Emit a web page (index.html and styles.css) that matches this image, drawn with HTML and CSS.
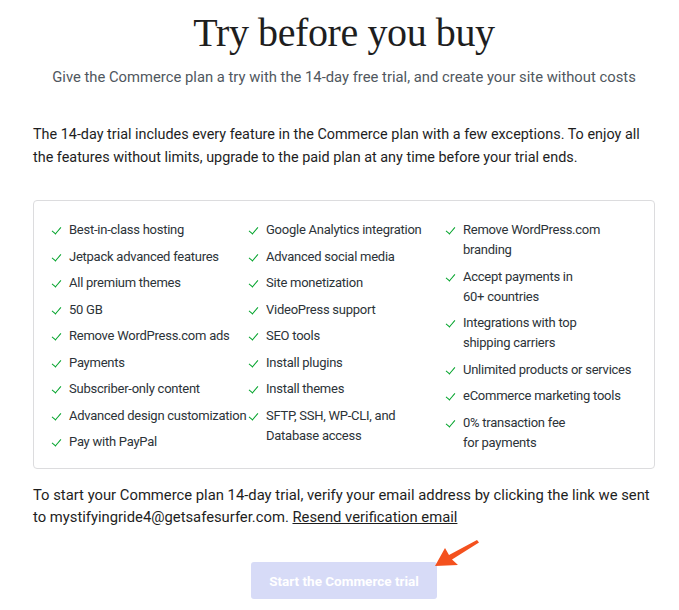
FILE: index.html
```html
<!DOCTYPE html>
<html>
<head>
<meta charset="utf-8">
<link rel="stylesheet" href="styles.css">
</head>
<body>
<main class="page">
  <h1 class="title">Try before you buy</h1>
  <p class="subtitle">Give the Commerce plan a try with the 14-day free trial, and create your site without costs</p>
  <p class="intro">The 14-day trial includes every feature in the Commerce plan with a few exceptions. To enjoy all the features without limits, upgrade to the paid plan at any time before your trial ends.</p>
  <div class="features">
    <ul class="col">
      <li><span class="check"></span><span>Best-in-class hosting</span></li>
      <li><span class="check"></span><span>Jetpack advanced features</span></li>
      <li><span class="check"></span><span>All premium themes</span></li>
      <li><span class="check"></span><span>50 GB</span></li>
      <li><span class="check"></span><span>Remove WordPress.com ads</span></li>
      <li><span class="check"></span><span>Payments</span></li>
      <li><span class="check"></span><span>Subscriber-only content</span></li>
      <li><span class="check"></span><span>Advanced design customization</span></li>
      <li><span class="check"></span><span>Pay with PayPal</span></li>
    </ul>
    <ul class="col">
      <li><span class="check"></span><span>Google Analytics integration</span></li>
      <li><span class="check"></span><span>Advanced social media</span></li>
      <li><span class="check"></span><span>Site monetization</span></li>
      <li><span class="check"></span><span>VideoPress support</span></li>
      <li><span class="check"></span><span>SEO tools</span></li>
      <li><span class="check"></span><span>Install plugins</span></li>
      <li><span class="check"></span><span>Install themes</span></li>
      <li><span class="check"></span><span>SFTP, SSH, WP-CLI, and<br>Database access</span></li>
    </ul>
    <ul class="col">
      <li><span class="check"></span><span>Remove WordPress.com<br>branding</span></li>
      <li><span class="check"></span><span>Accept payments in<br>60+ countries</span></li>
      <li><span class="check"></span><span>Integrations with top<br>shipping carriers</span></li>
      <li><span class="check"></span><span>Unlimited products or services</span></li>
      <li><span class="check"></span><span>eCommerce marketing tools</span></li>
      <li><span class="check"></span><span>0% transaction fee<br>for payments</span></li>
    </ul>
  </div>
  <p class="verify">To start your Commerce plan 14-day trial, verify your email address by clicking the link we sent to mystifyingride4@getsafesurfer.com. <a class="resend" href="#">Resend verification email</a></p>
  <div class="actions">
    <button class="start" disabled>Start the Commerce trial</button>
    <svg class="arrow" width="52" height="32" viewBox="0 0 52 32"><path d="M5 28 L15 10 L19 17 L47 2 L49 4.5 L22 21.5 L28 27 Z" fill="#f4511e"/></svg>
  </div>
</main>
</body>
</html>
```
FILE: styles.css
```css
* { box-sizing: border-box; }
html, body { margin: 0; padding: 0; background: #fff; }
body { font-family: Roboto, "Liberation Sans", sans-serif; color: #1e1e1e; }
.page { width: 622px; margin-left: 33px; padding-top: 9px; }
.title { font-family: "Liberation Serif", serif; font-weight: normal; font-size: 40px; line-height: 48px; margin: 0; text-align: center; color: #1e1e1e; letter-spacing: -0.4px; }
.subtitle { margin: 10px 0 0; text-align: center; font-size: 14.8px; color: #50575e; line-height: 20px; }
.intro { margin: 36px 0 0; font-size: 14.4px; line-height: 23px; }
.features { margin-top: 31px; border: 1px solid #dcdcde; border-radius: 4px; display: grid; grid-template-columns: 197px 197px 197px; padding: 19px 0 22px 18px; height: 269px; }
.col { list-style: none; margin: 0; padding: 0; display: flex; flex-direction: column; gap: 6.5px; }
.col li { display: flex; align-items: flex-start; font-size: 13px; line-height: 20px; color: #2c3338; white-space: nowrap; letter-spacing: -0.25px; }
.check { width: 17px; flex: none; height: 20px; position: relative; }
.check::after { content: ""; position: absolute; left: 2px; top: 5px; width: 4px; height: 8px; border-right: 1.5px solid #00a32a; border-bottom: 1.5px solid #00a32a; transform: rotate(40deg); }
.verify { margin: 15px 0 0; font-size: 14.8px; line-height: 22px; }
.resend { color: #1e1e1e; text-decoration: underline; }
.actions { margin-top: 34px; display: flex; justify-content: center; position: relative; }
.start { width: 186px; height: 37px; border: none; border-radius: 3px; background: #d7dbf7; color: #fff; font-family: Roboto, sans-serif; font-weight: 700; font-size: 13.5px; }
.arrow { position: absolute; left: 397px; top: -24px; }
```
